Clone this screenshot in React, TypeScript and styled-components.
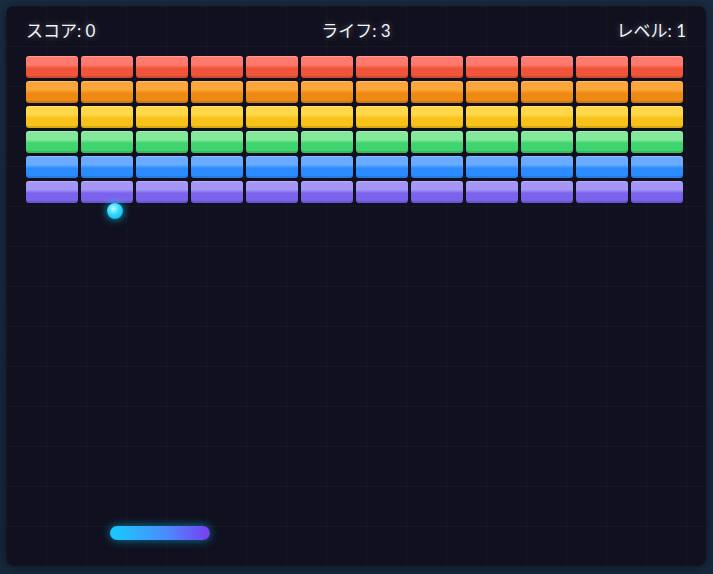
import React from "react";
import styled, { createGlobalStyle } from "styled-components";

const Global = createGlobalStyle`
  html, body { margin: 0; padding: 0; }
  body { width: 713px; height: 574px; background: linear-gradient(180deg, #1b2d44 0%, #16283c 100%); font-family: Lato, "Noto Sans CJK JP", sans-serif; overflow: hidden; }
`;

const Outer = styled.div`
  padding: 6px 7px 8px 6px;
  height: 574px;
  box-sizing: border-box;
`;

const Board = styled.div`
  position: relative;
  height: 100%;
  border-radius: 8px;
  background-color: #10101f;
  background-image:
    linear-gradient(rgba(255,255,255,0.025) 1px, transparent 1px),
    linear-gradient(90deg, rgba(255,255,255,0.025) 1px, transparent 1px);
  background-size: 40px 40px;
  padding: 12px 20px 0 20px;
  box-sizing: border-box;
  box-shadow: 0 0 12px rgba(0,0,0,0.5);
`;

const Hud = styled.div`
  display: flex;
  justify-content: space-between;
  color: #f2f4f8;
  font-size: 17px;
  height: 26px;
  line-height: 26px;
  padding: 0 0 0 0;
  text-shadow: 0 0 6px rgba(255,255,255,0.35);
  margin-bottom: 12px;
`;

const Grid = styled.div`
  display: grid;
  grid-template-columns: repeat(12, 52px);
  grid-auto-rows: 22px;
  gap: 3px;
`;

const Brick = styled.div<{ $top: string; $bot: string }>`
  border-radius: 3px;
  background: linear-gradient(180deg, ${p => p.$top} 0%, ${p => p.$top} 40%, ${p => p.$bot} 55%, ${p => p.$bot} 100%);
  box-shadow: inset 0 1px 0 rgba(255,255,255,0.25), inset 0 -2px 0 rgba(0,0,0,0.12);
`;

const Ball = styled.div`
  position: absolute;
  left: 101px;
  top: 197px;
  width: 16px;
  height: 16px;
  border-radius: 50%;
  background: radial-gradient(circle at 40% 35%, #b8f6ff 0%, #2cd8ff 45%, #0aa6e8 100%);
  box-shadow: 0 0 8px rgba(0,220,255,0.8);
`;

const Paddle = styled.div`
  position: absolute;
  left: 104px;
  top: 520px;
  width: 100px;
  height: 14px;
  border-radius: 7px;
  background: linear-gradient(90deg, #16ccff 0%, #4a8dff 55%, #7a3df0 100%);
  box-shadow: 0 0 10px rgba(0,200,255,0.6);
`;

const rows: [string, string][] = [
  ["#ff7a6e", "#f0553a"],
  ["#fba63a", "#ee8a14"],
  ["#ffd84a", "#f7c21a"],
  ["#84e89a", "#3fd46e"],
  ["#6aaaff", "#2a8cff"],
  ["#a596f6", "#7b62ec"],
];

export default function App() {
  return (
    <>
      <Global />
      <Outer>
        <Board>
          <Hud>
            <span>スコア: 0</span>
            <span>ライフ: 3</span>
            <span>レベル: 1</span>
          </Hud>
          <Grid>
            {rows.map(([t, b], r) =>
              Array.from({ length: 12 }).map((_, c) => <Brick key={`${r}-${c}`} $top={t} $bot={b} />)
            )}
          </Grid>
          <Ball />
          <Paddle />
        </Board>
      </Outer>
    </>
  );
}
